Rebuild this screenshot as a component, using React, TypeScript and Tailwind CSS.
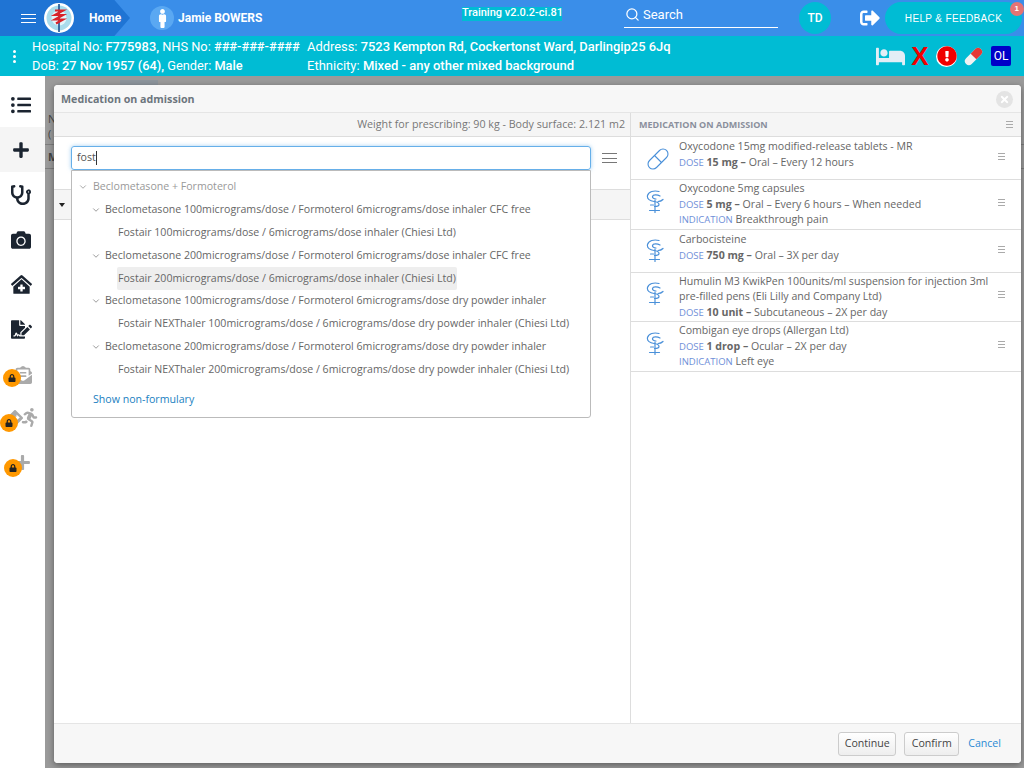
import { Search, Pill, ChevronDown } from 'lucide-react'
import {
  FaListUl, FaPlus, FaStethoscope, FaCamera, FaClinicMedical, FaFileSignature,
  FaEnvelopeOpenText, FaDirections, FaRunning, FaLock, FaBed, FaExclamationCircle,
  FaSignOutAlt, FaTimes, FaMale,
} from 'react-icons/fa'

const open = { fontFamily: '"Open Sans", sans-serif' }

function Logo() {
  return (
    <svg width="30" height="30" viewBox="0 0 30 30">
      <circle cx="15" cy="15" r="15" fill="#fff" />
      <circle cx="15" cy="15" r="12.5" fill="#a9dcec" />
      <circle cx="15" cy="15" r="7.5" fill="#e4f5fa" />
      <path d="M15 1v28" stroke="#1c4f8f" strokeWidth="1.6" />
      <path d="M11 7.5h8l-8 4.5h8l-8 4.5h8l-7 4" fill="none" stroke="#d8232a" strokeWidth="2.2" />
    </svg>
  )
}

function DrugIcon() {
  return (
    <svg width="18" height="24" viewBox="0 0 18 24" fill="none" stroke="#4a90d9" strokeWidth="1.2" strokeLinecap="round">
      <path d="M13 1.5C8 .2 2.5 1.5 1.5 5.5 .8 9 4 11 8 11.5c3 .4 5 1.5 5 3s-2 2-4.500 2" />
      <path d="M14 6C11 4.300 7 4.500 6.500 6.500 6.200 8 8 9 10 9" />
      <path d="M17 9.500c-1.500 1.500-3.500 2-5 2" />
      <path d="M9 10v12.500" />
      <path d="M4.500 15h3M3.500 20.500h10" />
    </svg>
  )
}

function Lines({ className }: { className: string }) {
  return (
    <div className={`flex flex-col justify-between ${className}`}>
      <div className="h-px bg-current" />
      <div className="h-px bg-current" />
      <div className="h-px bg-current" />
    </div>
  )
}

function SideItem({ children, active }: { children: React.ReactNode; active?: boolean }) {
  return (
    <div className={`relative flex h-[45px] w-full items-center justify-center pr-[3px] ${active ? 'bg-[#f5f5f5]' : ''}`}>
      {children}
    </div>
  )
}

function Lock({ className }: { className: string }) {
  return (
    <div className={`absolute flex h-[18px] w-[18px] items-center justify-center rounded-full bg-[#ff9800] ${className}`}>
      <FaLock className="text-[8px] text-[#222]" />
    </div>
  )
}

const tree = [
  { level: 0, text: 'Beclometasone + Formoterol' },
  { level: 1, text: 'Beclometasone 100micrograms/dose / Formoterol 6micrograms/dose inhaler CFC free' },
  { level: 2, text: 'Fostair 100micrograms/dose / 6micrograms/dose inhaler (Chiesi Ltd)' },
  { level: 1, text: 'Beclometasone 200micrograms/dose / Formoterol 6micrograms/dose inhaler CFC free' },
  { level: 2, text: 'Fostair 200micrograms/dose / 6micrograms/dose inhaler (Chiesi Ltd)', selected: true },
  { level: 1, text: 'Beclometasone 100micrograms/dose / Formoterol 6micrograms/dose dry powder inhaler' },
  { level: 2, text: 'Fostair NEXThaler 100micrograms/dose / 6micrograms/dose dry powder inhaler (Chiesi Ltd)' },
  { level: 1, text: 'Beclometasone 200micrograms/dose / Formoterol 6micrograms/dose dry powder inhaler' },
  { level: 2, text: 'Fostair NEXThaler 200micrograms/dose / 6micrograms/dose dry powder inhaler (Chiesi Ltd)' },
]

const meds = [
  { row: 'h-[43px] pt-[2px]', up: '', pill: true, name: ['Oxycodone 15mg modified-release tablets - MR'], dose: '15 mg', rest: 'Oral – Every 12 hours' },
  { row: 'h-[50px] pt-[1px]', up: 'mb-[6px]', name: ['Oxycodone 5mg capsules'], dose: '5 mg', rest: 'Oral – Every 6 hours – When needed', ind: 'Breakthrough pain' },
  { row: 'h-[43px] pt-[2px]', up: 'mb-[2px]', name: ['Carbocisteine'], dose: '750 mg', rest: 'Oral – 3X per day' },
  { row: 'h-[49px] pt-[0.5px]', up: 'mb-[6px]', name: ['Humulin M3 KwikPen 100units/ml suspension for injection 3ml', 'pre-filled pens (Eli Lilly and Company Ltd)'], dose: '10 unit', rest: 'Subcutaneous – 2X per day' },
  { row: 'h-[50px] pt-[1px]', up: 'mb-[6px]', name: ['Combigan eye drops (Allergan Ltd)'], dose: '1 drop', rest: 'Ocular – 2X per day', ind: 'Left eye' },
]

export default function App() {
  return (
    <div className="relative flex h-[768px] w-[1024px] flex-col overflow-hidden bg-white font-['Roboto',sans-serif]">
      {/* top bar */}
      <div className="flex h-[36px] shrink-0 items-center whitespace-nowrap bg-[#3a8ee9] text-white">
        <div className="flex h-full w-[130px] shrink-0 items-center bg-[#1f74d4] [clip-path:polygon(0_0,88%_0,100%_50%,88%_100%,0_100%)]">
          <div className="ml-[21px] flex h-[9px] w-[15px] flex-col justify-between">
            <div className="h-px bg-white" />
            <div className="h-px bg-white" />
            <div className="h-px bg-white" />
          </div>
          <div className="ml-[8px]"><Logo /></div>
          <span className="ml-[15px] text-[12px] font-bold">Home</span>
        </div>
        <div className="flex w-[332px] shrink-0 items-center pl-[20px]">
          <div className="flex h-[24px] w-[24px] items-center justify-center rounded-full bg-[#5aa8f2]">
            <FaMale className="text-[19px]" />
          </div>
          <span className="ml-[4px] text-[12px] font-bold">Jamie BOWERS</span>
        </div>
        <div className="mt-[7px] h-[14px] w-[100px] shrink-0 self-start bg-[#00bcd4] text-center text-[11px] font-medium leading-[12px]">Training v2.0.2-ci.81</div>
        <div className="ml-[62px] mt-[3px] flex h-[25px] w-[154px] shrink-0 items-center self-start border-b border-white pb-[1px] pl-px">
          <Search size={15} strokeWidth={2} />
          <span className="ml-[3px] text-[13px]">Search</span>
        </div>
        <div className="ml-[21px] flex h-[32px] w-[32px] shrink-0 items-center justify-center rounded-full bg-[#00bcd4] text-[12px] font-medium">TD</div>
        <FaSignOutAlt className="ml-[29px] shrink-0 text-[20px]" />
        <div className="relative ml-[5px] flex h-[32px] w-[137px] shrink-0 items-center justify-center rounded-full bg-[#00bcd4] text-[10px] font-medium tracking-[0.35px]" style={{ fontFamily: '"Liberation Sans", sans-serif' }}>
          HELP &amp; FEEDBACK
          <div className="absolute right-[-2px] top-0 flex h-[14px] w-[14px] items-center justify-center rounded-full bg-[#e57373] text-[8px] font-bold">1</div>
        </div>
      </div>

      {/* patient bar */}
      <div className="flex h-[40px] shrink-0 items-center bg-[#00bcd4] text-[12.8px] leading-[19px] text-white">
        <div className="ml-[13px] flex w-[19px] shrink-0 flex-col gap-[2px]">
          <div className="h-[3px] w-[3px] rounded-full bg-white" />
          <div className="h-[3px] w-[3px] rounded-full bg-white" />
          <div className="h-[3px] w-[3px] rounded-full bg-white" />
        </div>
        <div className="w-[275px] shrink-0 whitespace-nowrap">
          <div>Hospital No: <b className="font-medium">F775983,</b> NHS No: <b className="font-medium">###-###-####</b></div>
          <div>DoB: <b className="font-medium">27 Nov 1957 (64),</b> Gender: <b className="font-medium">Male</b></div>
        </div>
        <div className="whitespace-nowrap">
          <div className="text-[12.9px]">Address: <b className="font-medium">7523 Kempton Rd, Cockertonst Ward, Darlingip25 6Jq</b></div>
          <div className="text-[13px]">Ethnicity: <b className="font-medium">Mixed - any other mixed background</b></div>
        </div>
        <div className="ml-auto mr-[13px] flex items-center">
          <FaBed className="text-[29px] text-[#e3eef6]" />
          <span className="ml-[6px] w-[18px] text-center text-[26px] font-bold leading-[28px] text-[#f00000]" style={{ fontFamily: '"Liberation Sans", sans-serif' }}>X</span>
          <div className="ml-[7px] flex h-[21px] w-[21px] items-center justify-center rounded-full bg-white">
            <FaExclamationCircle className="text-[20px] text-[#f00000]" />
          </div>
          <svg className="ml-[6px]" width="21" height="21" viewBox="0 0 21 21">
            <g transform="rotate(-45 10.5 10.5)">
              <rect x="0" y="6.5" width="21" height="8" rx="4" fill="#f2f2f2" />
              <path d="M10.5 6.5h6.5a4 4 0 0 1 0 8h-6.5z" fill="#e53935" />
            </g>
          </svg>
          <div className="ml-[7px] flex h-[20px] w-[20px] items-center justify-center rounded-[2px] bg-[#0000c8] text-[12px]">OL</div>
        </div>
      </div>

      <div className="flex min-h-0 flex-1">
        {/* sidebar */}
        <div className="relative z-10 flex w-[45px] shrink-0 flex-col items-center bg-white pt-[6px] text-[#1b2430]">
          <SideItem><FaListUl className="text-[20px]" /></SideItem>
          <SideItem active><FaPlus className="text-[18px]" /></SideItem>
          <SideItem><FaStethoscope className="text-[20px]" /></SideItem>
          <SideItem><FaCamera className="text-[20px]" /></SideItem>
          <SideItem><FaClinicMedical className="text-[21px]" /></SideItem>
          <SideItem><FaFileSignature className="text-[21px]" /></SideItem>
          <SideItem>
            <FaEnvelopeOpenText className="ml-[3px] text-[18px] text-[#aaa]" />
            <Lock className="left-[3px] top-[17px]" />
          </SideItem>
          <SideItem>
            <div className="mb-[4px] ml-[3px] flex items-center text-[#aaa]">
              <FaDirections className="text-[16px]" />
              <FaRunning className="-ml-[3px] text-[19px]" />
            </div>
            <Lock className="left-0 top-[17px]" />
          </SideItem>
          <SideItem>
            <FaPlus className="mb-[4px] ml-[3px] text-[17px] text-[#aaa]" />
            <Lock className="left-[4px] top-[17px]" />
          </SideItem>
        </div>

        {/* page behind the dialog */}
        <div className="min-w-0 flex-1 bg-[#9a9a9a] text-[11px] text-[#444]" style={open}>
          <div className="ml-[75px] mt-[4px] h-[5px] w-[38px] bg-[#8d959c]" />
          <div className="mt-[26px] h-[34px] border-b border-[#7d7d7d] pl-[3px] leading-[15px]">
            <div>N</div>
            <div>(</div>
          </div>
          <div className="h-[24px] border-b border-[#7d7d7d] py-[5px] pl-[3px] font-bold leading-[14px]">M</div>
        </div>
      </div>

      {/* dialog */}
      <div className="absolute left-[54px] top-[85px] flex h-[678px] w-[967px] flex-col overflow-hidden rounded-[4px] bg-white text-[10.6px] text-[#666] shadow-[0_2px_6px_rgba(0,0,0,0.4)]" style={open}>
        <div className="flex h-[27px] shrink-0 items-center justify-between bg-[#f7f7f7] pl-[7px] pr-[8px] pt-[2px]">
          <span className="text-[10.7px] font-bold text-[#6c757d]">Medication on admission</span>
          <div className="flex h-[17px] w-[17px] items-center justify-center rounded-full bg-[#e4e4e4]">
            <FaTimes className="text-[11px] text-white" />
          </div>
        </div>

        <div className="flex min-h-0 flex-1 border-t border-[#e5e5e5]">
          {/* left column */}
          <div className="relative flex w-[577px] shrink-0 flex-col border-r border-[#ddd]">
            <div className="flex h-[24px] shrink-0 items-center justify-end border-b border-[#ddd] bg-[#f5f5f5] pr-[5px] text-[10.7px] text-[#777]">
              Weight for prescribing: 90 kg - Body surface: 2.121 m2
            </div>
            <div className="flex h-[53px] shrink-0 items-start border-b border-[#ddd] pl-[17px] pt-[9px]">
              <div className="flex h-[24px] w-[520px] items-center rounded-[3px] border border-[#66afe9] pl-[5px] text-[#555] shadow-[0_0_4px_rgba(102,175,233,0.6)]">
                fost<span className="h-[14px] w-px bg-[#333]" />
              </div>
              <Lines className="ml-[11px] mt-[7px] h-[10px] w-[15px] text-[#777]" />
            </div>
            <div className="flex h-[30px] shrink-0 items-center border-b border-[#ddd] bg-[#f5f5f5] pl-[5px]">
              <div className="h-0 w-0 border-x-[3.5px] border-t-[4px] border-x-transparent border-t-[#222]" />
            </div>

            {/* search results, over the list */}
            <div className="absolute left-[17px] top-[57px] z-10 h-[248px] w-[520px] rounded-b-[3px] border border-[#bbb] bg-white pl-[5px] pt-[5px]">
              {tree.map((t) => (
                <div key={t.text} className="flex h-[22.8px] items-center whitespace-nowrap">
                  {t.level === 0 && (
                    <>
                      <ChevronDown size={10} className="ml-[1px] text-[#999]" />
                      <span className="ml-[5px] text-[#999]">{t.text}</span>
                    </>
                  )}
                  {t.level === 1 && (
                    <>
                      <ChevronDown size={10} className="ml-[14px] text-[#888]" />
                      <span className="ml-[4px] text-[#666]">{t.text}</span>
                    </>
                  )}
                  {t.level === 2 && (
                    <span className={`ml-[40px] flex h-[22.8px] items-center rounded-[2px] px-px text-[#666] ${t.selected ? 'bg-[#eeeeee]' : ''}`}>{t.text}</span>
                  )}
                </div>
              ))}
              <div className="ml-[16px] mt-[11px] text-[#1a7fc1]">Show non-formulary</div>
            </div>
          </div>

          {/* right column */}
          <div className="flex min-w-0 flex-1 flex-col">
            <div className="flex h-[24px] shrink-0 items-center justify-between border-b border-[#ddd] bg-[#f5f5f5] pl-[8px] pr-[8px]">
              <span className="text-[9px] font-bold text-[#8a8f9c]">MEDICATION ON ADMISSION</span>
              <Lines className="h-[7px] w-[7px] text-[#aaa]" />
            </div>
            {meds.map((m) => (
              <div key={m.name[0]} className={`flex ${m.row} shrink-0 items-start border-b border-[#ddd]`}>
                <div className={`flex w-[48px] shrink-0 justify-center self-center ${m.up}`}>
                  {m.pill ? <Pill size={24} strokeWidth={1.1} className="ml-[5px] text-[#4a90d9]" /> : <DrugIcon />}
                </div>
                <div className="min-w-0 flex-1 whitespace-nowrap leading-[15.5px]">
                  {m.name.map((n) => <div key={n}>{n}</div>)}
                  <div>
                    <span className="text-[9.5px] text-[#6f8fd8]">DOSE</span> <b className="font-bold">{m.dose} –</b> {m.rest}
                  </div>
                  {m.ind && (
                    <div><span className="text-[9.5px] text-[#6f8fd8]">INDICATION</span> {m.ind}</div>
                  )}
                </div>
                <Lines className="mb-[5px] mr-[16px] h-[7px] w-[7px] shrink-0 self-center text-[#aaa]" />
              </div>
            ))}
          </div>
        </div>

        <div className="flex h-[40px] shrink-0 items-center justify-end border-t border-[#e5e5e5] bg-[#f7f7f7] pr-[20px]">
          <div className="flex h-[24px] w-[58px] items-center justify-center rounded-[3px] border border-[#ccc] bg-gradient-to-b from-white to-[#eee] text-[#444]">Continue</div>
          <div className="ml-[8px] flex h-[24px] w-[55px] items-center justify-center rounded-[3px] border border-[#ccc] bg-gradient-to-b from-white to-[#eee] text-[#444]">Confirm</div>
          <span className="ml-[9px] text-[#2a8ad4]">Cancel</span>
        </div>
      </div>
    </div>
  )
}
